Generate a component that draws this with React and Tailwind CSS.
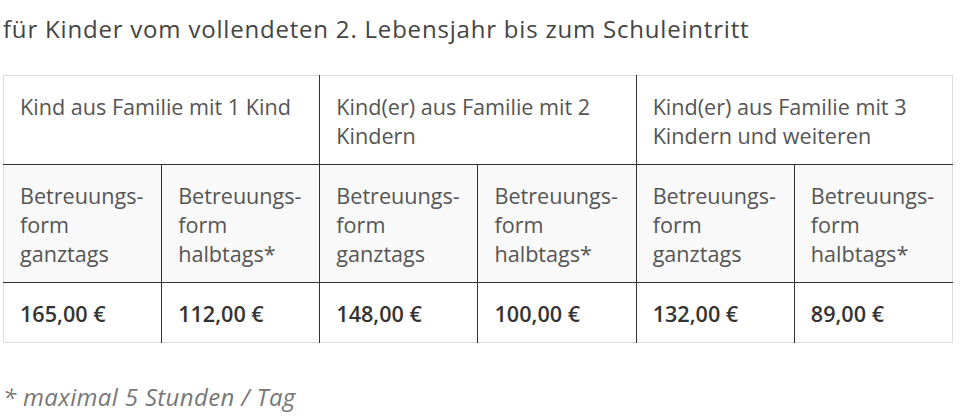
const groups = [
  "Kind aus Familie mit 1 Kind",
  "Kind(er) aus Familie mit 2 Kindern",
  "Kind(er) aus Familie mit 3 Kindern und weiteren",
];

const prices = ["165,00 €", "112,00 €", "148,00 €", "100,00 €", "132,00 €", "89,00 €"];

function App() {
  return (
    <div className="bg-white w-[960px] h-[418px] pl-[3px] pt-[14px] text-[#555] font-['Open_Sans',sans-serif]">
      <h2 className="text-[24px] leading-[30px] tracking-[0.8px] text-[#444]">
        für Kinder vom vollendeten 2. Lebensjahr bis zum Schuleintritt
      </h2>

      <table className="mt-[31px] w-[950px] table-fixed border-collapse border border-[#ddd] text-[21.6px] leading-[29px]">
        <tbody>
          <tr>
            {groups.map((g, i) => (
              <td
                key={g}
                colSpan={2}
                className={
                  "align-top px-[16px] pt-[16px] pb-[14px] border-b border-[#333] " +
                  (i > 0 ? "border-l" : "")
                }
              >
                {g}
              </td>
            ))}
          </tr>
          <tr className="bg-[#f9f9f9]">
            {prices.map((_, i) => (
              <td
                key={i}
                className={
                  "align-top px-[16px] pt-[16px] pb-[14px] border-b border-[#333] " +
                  (i > 0 ? "border-l" : "")
                }
              >
                Betreuungs-
                <br />
                form
                <br />
                {i % 2 === 0 ? "ganztags" : "halbtags*"}
              </td>
            ))}
          </tr>
          <tr>
            {prices.map((p, i) => (
              <td
                key={p}
                className={
                  "align-top px-[16px] pt-[16px] pb-[14px] font-semibold text-[#333] border-[#333] " +
                  (i > 0 ? "border-l" : "")
                }
              >
                {p}
              </td>
            ))}
          </tr>
        </tbody>
      </table>

      <p className="mt-[39px] text-[24px] leading-[30px] tracking-[0.35px] italic text-[#777]">
        * maximal 5 Stunden / Tag
      </p>
    </div>
  );
}

export default App;
